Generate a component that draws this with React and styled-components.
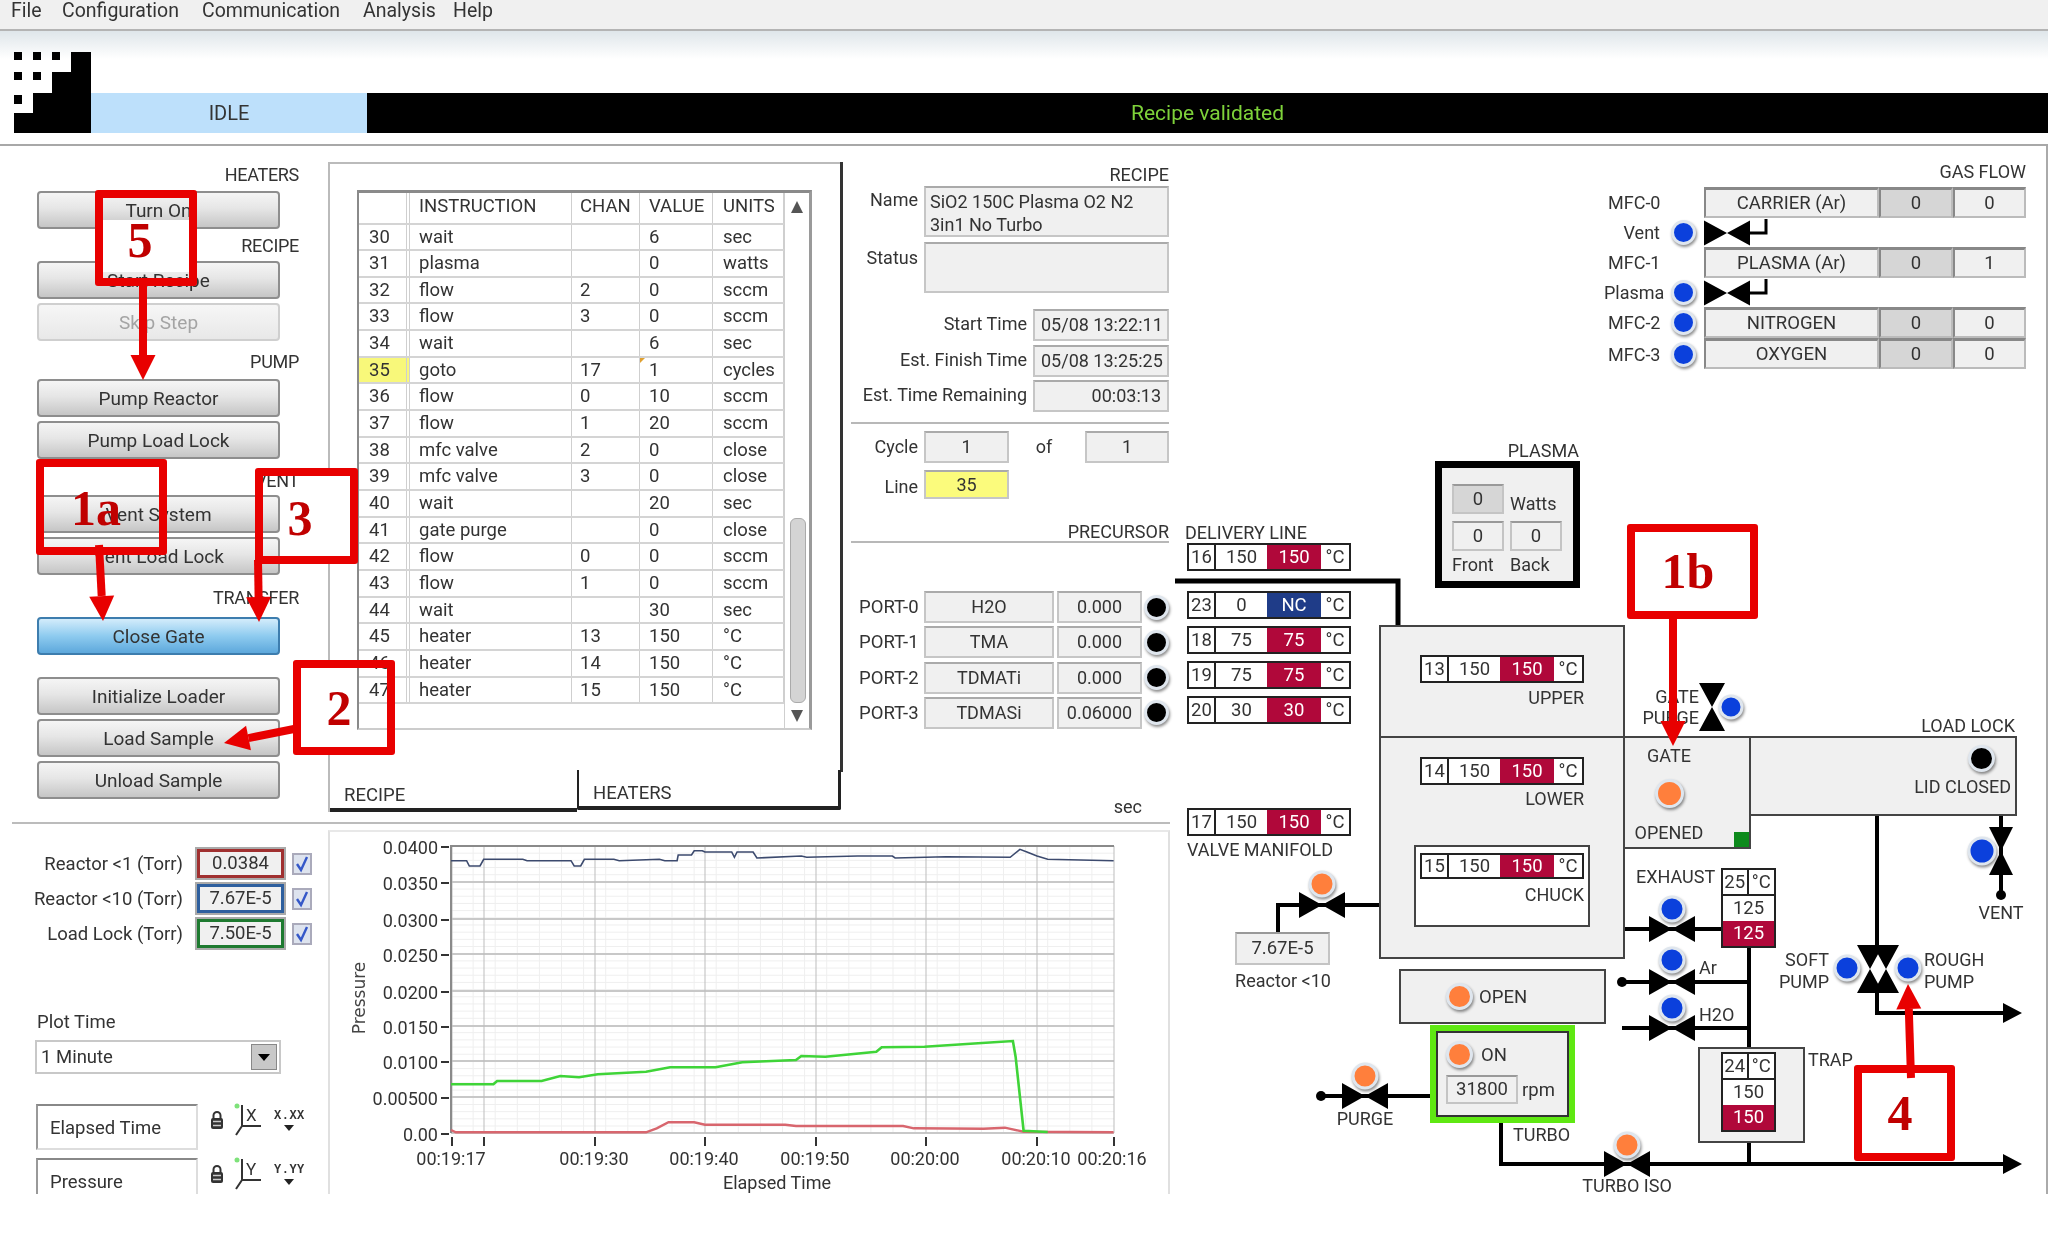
import styled, { createGlobalStyle, css } from 'styled-components';

const GlobalStyle = createGlobalStyle`
  html, body {
    margin: 0;
    background: #fff;
  }
  body {
    font-family: Roboto, "Liberation Sans", sans-serif;
    font-size: 18.5px;
    color: #333;
  }
  * {
    box-sizing: border-box;
  }
`;

const RECIPE_ROWS = [
  [30, 'wait', '', '6', 'sec'],
  [31, 'plasma', '', '0', 'watts'],
  [32, 'flow', '2', '0', 'sccm'],
  [33, 'flow', '3', '0', 'sccm'],
  [34, 'wait', '', '6', 'sec'],
  [35, 'goto', '17', '1', 'cycles'],
  [36, 'flow', '0', '10', 'sccm'],
  [37, 'flow', '1', '20', 'sccm'],
  [38, 'mfc valve', '2', '0', 'close'],
  [39, 'mfc valve', '3', '0', 'close'],
  [40, 'wait', '', '20', 'sec'],
  [41, 'gate purge', '', '0', 'close'],
  [42, 'flow', '0', '0', 'sccm'],
  [43, 'flow', '1', '0', 'sccm'],
  [44, 'wait', '', '30', 'sec'],
  [45, 'heater', '13', '150', '°C'],
  [46, 'heater', '14', '150', '°C'],
  [47, 'heater', '15', '150', '°C'],
];

const PORTS = [
  ['PORT-0', 'H2O', '0.000'],
  ['PORT-1', 'TMA', '0.000'],
  ['PORT-2', 'TDMATi', '0.000'],
  ['PORT-3', 'TDMASi', '0.06000'],
];

const LED_COLORS = { blue: '#0b40dc', orange: '#ff7f3c', black: '#000' };

const Page = styled.div`
  position: relative;
  width: 2048px;
  height: 1256px;
  overflow: hidden;
  background: #fff;
  filter: blur(0.35px);
`;

const MenuBar = styled.div`
  display: flex;
  height: 31px;
  padding-left: 11px;
  background: #f0f0f0;
  border-bottom: 2px solid #b4b4b4;
  font-size: 19.5px;
  line-height: 22px;
`;

const MenuItem = styled.span`
  width: ${p => p.$w}px;
`;

const Banner = styled.div`
  display: flex;
  align-items: flex-end;
  height: 115px;
  padding: 0 0 11px 14px;
  background: linear-gradient(#dfe6ea, #fff 28px);
  border-bottom: 2px solid #a8a8a8;
`;

const StatusBar = styled.div`
  display: flex;
  flex: 1;
  height: 40px;
  background: #000;
`;

const IdleCell = styled.div`
  display: flex;
  align-items: center;
  justify-content: center;
  width: 276px;
  background: #bde0fb;
  font-size: 20px;
`;

const MessageCell = styled.div`
  flex: 1;
  text-align: center;
  line-height: 40px;
  font-size: 21px;
  color: #7ed23a;
`;

const Body = styled.div`
  display: flex;
  height: 1048px;
`;

const LeftSide = styled.div`
  width: 1170px;
`;

const TopRow = styled.div`
  display: flex;
  height: 676px;
`;

const Controls = styled.div`
  width: 328px;
  padding: 19px 0 0 37px;
`;

const Group = styled.div`
  display: flex;
  flex-direction: column;
  gap: 4px;
  width: 262px;
  margin-top: ${p => p.$mt || 0}px;
`;

const GroupLabel = styled.div`
  height: 20px;
  margin-bottom: ${p => p.$gap}px;
  text-align: right;
  font-size: 18px;
  letter-spacing: -0.3px;
  line-height: 20px;
`;

const Button = styled.div`
  display: flex;
  align-items: center;
  justify-content: center;
  width: 243px;
  height: 38px;
  border: 2px solid ${p => (p.$active ? '#3d7dae' : p.$disabled ? '#cfcfcf' : '#8e8e8e')};
  border-radius: 4px;
  font-size: 19px;
  color: ${p => (p.$disabled ? '#a4a4a4' : '#333')};
  background: ${p =>
    p.$active
      ? 'linear-gradient(#d3ecfb, #8ecbef 50%, #5da8dc)'
      : p.$disabled
        ? 'linear-gradient(#f6f6f6, #e8e8e8)'
        : 'linear-gradient(#f5f5f5, #e6e6e6 45%, #c6c6c6)'};
`;

const RecipePanel = styled.div`
  position: relative;
  width: 515px;
  height: 650px;
  margin-top: 16px;
  padding: 26px 0 0 27px;
  border-top: 2px solid #bbb;
  border-left: 2px solid #bbb;
`;

const PanelEdge = styled.div`
  position: absolute;
  top: -2px;
  right: 0;
  width: 3px;
  height: 610px;
  background: #333;
`;

const Grid = styled.div`
  width: 455px;
  height: 540px;
  display: flex;
  border-top: 3px solid #8a8a8a;
  border-left: 2px solid #8a8a8a;
  border-right: 3px solid #9a9a9a;
  border-bottom: 2px solid #ccc;
`;

const GridBody = styled.div`
  width: 425px;
`;

const GridRow = styled.div`
  display: grid;
  grid-template-columns: 51px 162px 68px 73px 71px;
  height: ${p => p.$h}px;
  border-bottom: 2px solid #d4d4d4;
  line-height: ${p => p.$lh}px;
`;

const GridCell = styled.div`
  padding-left: ${p => p.$pad}px;
  border-right: 1px solid #cfcfcf;
  position: relative;
  background: ${p => (p.$mark ? '#f8f87a' : 'transparent')};
  font-size: 18.5px;
`;

const IndexCell = styled(GridCell)`
  border-right: 4px double #cfcfcf;
`;

const Corner = styled.span`
  position: absolute;
  top: 0;
  left: 0;
  border-top: 5px solid #e0a030;
  border-right: 5px solid transparent;
`;

const ScrollTrack = styled.div`
  position: relative;
  flex: 1;
  display: flex;
  flex-direction: column;
  align-items: center;
  justify-content: space-between;
  padding: 8px 0 6px;
  border-left: 1px solid #cfcfcf;
`;

const ScrollArrow = styled.span`
  width: 0;
  height: 0;
  border-left: 6px solid transparent;
  border-right: 6px solid transparent;
  ${p => (p.$down ? 'border-top: 12px solid #555;' : 'border-bottom: 12px solid #555;')}
`;

const ScrollThumb = styled.div`
  position: absolute;
  top: 325px;
  left: 5px;
  width: 16px;
  height: 185px;
  border: 1px solid #aaa;
  border-radius: 6px;
  background: #d4d4d4;
`;

const TabRow = styled.div`
  position: absolute;
  left: 0;
  bottom: 0;
  display: flex;
  align-items: flex-end;
`;

const RecipeTab = styled.div`
  width: 247px;
  height: 32px;
  padding-left: 14px;
  border-bottom: 4px solid #222;
  line-height: 31px;
`;

const HeaterTab = styled.div`
  width: 264px;
  height: 40px;
  margin-bottom: 2px;
  padding: 9px 0 0 14px;
  border: 3px solid #222;
  border-top-width: 0;
  border-left-width: 2px;
  border-bottom-width: 4px;
  border-radius: 0 0 2px 2px;
  line-height: 28px;
`;

const InfoPanel = styled.div`
  width: 318px;
  margin-left: 8px;
  padding-top: 19px;
`;

const Caption = styled.div`
  height: ${p => p.$h || 20}px;
  margin-top: ${p => p.$mt || 0}px;
  padding-right: ${p => p.$pr || 0}px;
  text-align: right;
  font-size: 18px;
  line-height: ${p => p.$h || 20}px;
`;

const FieldRow = styled.div`
  display: grid;
  grid-template-columns: ${p => p.$cols};
  margin-top: ${p => p.$mt}px;
`;

const FieldLabel = styled.div`
  padding: ${p => p.$top || 0}px 6px 0 0;
  text-align: ${p => p.$align || 'right'};
  font-size: 18px;
  line-height: ${p => (p.$top ? '20px' : `${p.$h}px`)};
  white-space: nowrap;
`;

const InfoBox = styled.div`
  height: ${p => p.$h}px;
  padding: ${p => p.$pad || '0 6px'};
  border: 2px solid #c6c6c6;
  border-top-color: #aaa;
  background: ${p => p.$bg || '#f0f0f0'};
  text-align: ${p => p.$align || 'center'};
  font-size: 18px;
  line-height: ${p => (p.$multi ? '23px' : `${p.$h - 4}px`)};
  white-space: nowrap;
`;

const Rule = styled.div`
  height: 2px;
  margin-top: ${p => p.$mt || 0}px;
  background: #b8b8b8;
`;

const PortList = styled.div`
  display: flex;
  flex-direction: column;
  gap: 3.3px;
  margin-top: 48px;
`;

const PortRow = styled.div`
  display: grid;
  grid-template-columns: 73px 130px 85px 30px;
  align-items: center;
`;

const PortName = styled.span`
  padding-left: 8px;
`;

const PortValue = styled(InfoBox)`
  margin-left: 3px;
  width: 85px;
`;

const Led = styled.span`
  display: inline-block;
  flex: none;
  width: ${p => p.$size || 25}px;
  height: ${p => p.$size || 25}px;
  border: 3px solid #dfe6ee;
  border-radius: 50%;
  background: ${p => LED_COLORS[p.$color]};
  box-shadow: 1px 2px 3px rgba(0, 0, 0, 0.45);
`;

const PortLed = styled(Led)`
  justify-self: end;
`;

const Separator = styled.div`
  height: 2px;
  margin-left: 12px;
  background: #bcbcbc;
`;

const BottomRow = styled.div`
  display: flex;
  height: 370px;
  overflow: hidden;
`;

const Gauges = styled.div`
  width: 328px;
  padding-top: 23px;
`;

const GaugeRow = styled.div`
  display: flex;
  align-items: center;
  height: 33px;
  margin-bottom: 2px;
`;

const GaugeLabel = styled.div`
  width: 183px;
  text-align: right;
  white-space: nowrap;
`;

const GaugeValue = styled.div`
  width: 91px;
  height: 33px;
  margin: 0 6px 0 12px;
  border: 2px solid #aaa;
  box-shadow: inset 0 0 0 3px ${p => p.$color};
  background: #f0f0f0;
  text-align: center;
  line-height: 29px;
`;

const CheckBox = styled.div`
  display: flex;
  align-items: center;
  justify-content: center;
  width: 20px;
  height: 22px;
  border: 2px solid #aab;
  background: #dde3ee;
`;

const PlotTime = styled.div`
  margin: 62px 0 0 37px;
  height: 20px;
  line-height: 20px;
`;

const Combo = styled.div`
  display: flex;
  align-items: center;
  justify-content: space-between;
  width: 246px;
  height: 34px;
  margin: 8px 0 0 35px;
  padding: 0 2px 0 4px;
  border: 2px solid #c8c8c8;
`;

const ComboButton = styled.span`
  display: flex;
  align-items: center;
  justify-content: center;
  width: 26px;
  height: 26px;
  border: 1px solid #888;
  background: #c8c8c8;
`;

const ComboArrow = styled.span`
  border-left: 6px solid transparent;
  border-right: 6px solid transparent;
  border-top: 7px solid #000;
`;

const AxisRow = styled.div`
  display: flex;
  align-items: center;
  margin: ${p => p.$mt}px 0 0 36px;
`;

const AxisName = styled.div`
  width: 162px;
  height: 46px;
  padding-left: 12px;
  border: 2px solid #ddd;
  border-top-color: #888;
  border-left-color: #999;
  line-height: 44px;
`;

const AxisTools = styled.div`
  display: flex;
  align-items: center;
  gap: 10px;
  margin: 0 0 14px 12px;
`;

const FormatBox = styled.div`
  display: flex;
  flex-direction: column;
  align-items: center;
  font: bold 12px "Liberation Mono", monospace;
  letter-spacing: 0.5px;
`;

const FormatCaret = styled.span`
  margin-top: 2px;
  border-left: 5px solid transparent;
  border-right: 5px solid transparent;
  border-top: 6px solid #222;
`;

const ChartPanel = styled.div`
  width: 842px;
  height: 364px;
  margin-top: 6px;
  border-top: 2px solid #e8e8e8;
  border-left: 2px solid #e0e0e0;
  border-right: 2px solid #e0e0e0;
`;

const Diagram = styled.div`
  position: relative;
  width: 878px;
  height: 1048px;
  border-right: 2px solid #aaa;
`;

const Piping = styled.svg`
  position: absolute;
  top: 0;
  left: 0;
`;

// schematic items take page coordinates, the canvas offset is worked out here
const place = css`
  position: absolute;
  left: ${p => p.$x - 1170}px;
  top: ${p => p.$y - 146}px;
`;

const Node = styled.div`
  ${place}
  width: ${p => p.$w}px;
  height: ${p => p.$h}px;
`;

const Tag = styled.span`
  ${place}
  white-space: nowrap;
  font-size: 18px;
  line-height: 22px;
  transform: translate(
    ${p => (p.$align === 'right' ? '-100%' : p.$align === 'center' ? '-50%' : '0')},
    -50%
  );
`;

const LedNode = styled(Led)`
  ${place}
  transform: translate(-50%, -50%);
`;

const Chamber = styled(Node)`
  display: flex;
  flex-direction: column;
  border: 2px solid #444;
  background: #f0f0f0;
`;

const HeaterBlock = styled(Chamber)`
  padding: ${p => p.$top}px 0 0 39px;
`;

const GateBlock = styled(Chamber)`
  align-items: center;
  padding: 7px 36px 0 0;
`;

const LoadLockBlock = styled(Chamber)`
  align-items: flex-end;
  padding: 7px 4px 0 0;
`;

const OpenBlock = styled(Chamber)`
  flex-direction: row;
  align-items: center;
  gap: 6px;
  padding-left: 45px;
`;

const TrapBlock = styled(Chamber)`
  padding: 3px 0 0 21px;
`;

const ChuckPanel = styled.div`
  width: 176px;
  height: 82px;
  margin: ${p => p.$mt}px 0 0 -6px;
  padding: 6px 4px;
  border: 2px solid #444;
  background: #fff;
`;

const BlockLabel = styled.div`
  width: 164px;
  margin-top: ${p => p.$mt}px;
  font-size: 18px;
  line-height: 22px;
  text-align: right;
`;

const GateLabel = styled.div`
  margin-top: ${p => p.$mt || 0}px;
  font-size: 18px;
  line-height: 22px;
  white-space: nowrap;
`;

const GateLed = styled(Led)`
  margin-top: 12px;
`;

const LidLed = styled(Led)`
  margin-right: 16px;
`;

const GreenSquare = styled.span`
  position: absolute;
  right: 0;
  bottom: 0;
  width: 15px;
  height: 15px;
  background: #0d8a1c;
`;

const DeliveryColumn = styled(Node)`
  display: flex;
  flex-direction: column;
`;

const DeliveryLabel = styled.div`
  margin: ${p => p.$mt || 0}px 0 0 ${p => p.$ml || 0}px;
  font-size: 18px;
  line-height: 21px;
  white-space: nowrap;
`;

const HeaterList = styled.div`
  display: flex;
  flex-direction: column;
  gap: 7px;
  margin-top: ${p => p.$mt}px;
`;

const Heater = styled.div`
  display: grid;
  flex: none;
  grid-template-columns: 27px 1fr 54px 28px;
  width: 164px;
  height: ${p => p.$h || 28}px;
  border: 2px solid #222;
  background: #fff;
  text-align: center;
  line-height: ${p => (p.$h || 28) - 4}px;
`;

const HeaterCell = styled.div`
  border-right: ${p => (p.$last ? '0' : '2px solid #222')};
`;

const HeaterValue = styled.div`
  background: ${p => (p.$nc ? '#1f3c88' : '#b0083a')};
  color: #fff;
`;

const StackHeater = styled.div`
  display: grid;
  grid-template-rows: 1fr 1fr 1fr;
  width: 55px;
  height: 80px;
  border: 2px solid #222;
  background: #fff;
  text-align: center;
  line-height: 24px;
`;

const PlacedStack = styled(StackHeater)`
  ${place}
`;

const StackTop = styled.div`
  display: grid;
  grid-template-columns: 1fr 1fr;
  border-bottom: 2px solid #222;
`;

const PlasmaBox = styled(Node)`
  display: grid;
  grid-template-columns: 52px 58px;
  grid-template-rows: 30px 30px 22px;
  column-gap: 6px;
  row-gap: 7px;
  padding: 16px 0 0 10px;
  border: 7px solid #000;
  background: #f0f0f0;
`;

const PlasmaNote = styled.span`
  align-self: end;
  font-size: 18px;
  line-height: 20px;
`;

const PlasmaFooter = styled.span`
  margin-top: -4px;
  font-size: 18px;
  line-height: 22px;
`;

const Readout = styled.div`
  width: ${p => p.$w}px;
  height: ${p => p.$h}px;
  border: 2px solid #c4c4c4;
  border-top-color: #999;
  background: ${p => p.$bg || '#f0f0f0'};
  text-align: center;
  line-height: ${p => p.$h - 4}px;
`;

const PlacedReadout = styled(Readout)`
  ${place}
`;

const TurboBox = styled(Node)`
  display: flex;
  flex-direction: column;
  gap: 7px;
  padding: 9px;
  border: 7px solid #5fe812;
  outline: 2px solid #333;
  outline-offset: -8px;
  background: #f0f0f0;
`;

const TurboRow = styled.div`
  display: flex;
  align-items: center;
  gap: ${p => p.$gap}px;
  white-space: nowrap;
`;

const GasFlow = styled(Node)`
  display: grid;
  grid-template-columns: 58px 42px 175px 74px 73px;
  grid-template-rows: 25px 31px 29px 31px 29px 31px 32px;
`;

const GasCaption = styled.div`
  grid-column: 1 / -1;
  text-align: right;
  font-size: 18px;
  line-height: 20px;
`;

const GasLabel = styled.div`
  padding: ${p => (p.$right ? '0 2px 0 0' : '0 0 0 4px')};
  text-align: ${p => (p.$right ? 'right' : 'left')};
  font-size: 18px;
  align-self: center;
  white-space: nowrap;
`;

const GasLed = styled(Led)`
  justify-self: center;
  align-self: center;
`;

const GasValve = styled.svg`
  grid-column: 3 / -1;
  display: block;
`;

const MfcCell = styled.div`
  height: 31px;
  border: 2px solid #bbb;
  border-top: 3px solid #888;
  border-left: 2px solid #888;
  background: ${p => (p.$dark ? '#d6d6d6' : '#f0f0f0')};
  text-align: center;
  line-height: 26px;
`;

const Overlay = styled.svg`
  position: absolute;
  top: 0;
  left: 0;
  pointer-events: none;
`;

const Callout = styled.div`
  position: absolute;
  left: ${p => p.$x}px;
  top: ${p => p.$y}px;
  width: ${p => p.$w}px;
  height: ${p => p.$h}px;
  border: 8px solid #e80000;
  border-radius: 3px;
  background: linear-gradient(#fff, #fff) no-repeat ${p => p.$fill || '0 0 / 100% 100%'};
`;

const CalloutText = styled.span`
  position: absolute;
  left: ${p => p.$x}px;
  top: ${p => p.$y}px;
  transform: translate(-50%, -50%);
  font: bold 50px "Liberation Serif", serif;
  color: #c00000;
  white-space: nowrap;
`;

const px = x => 330 + x / 1.867;
const py = y => 780 + y / 3;

const PRESSURE_BLUE = [[226,242],[255,242],[260,258],[280,258],[287,238],[360,238],[368,242],[450,242],[456,258],[468,258],[475,238],[530,238],[540,242],[615,238],[625,242],[648,242],[650,225],[675,225],[680,212],[695,212],[700,216],[750,216],[755,232],[760,216],[790,216],[797,234],[880,228],[890,232],[985,228],[1050,228],[1055,234],[1150,230],[1270,232],[1288,208],[1300,215],[1320,228],[1340,238],[1463,242]];
const PRESSURE_GREEN = [[226,913],[305,913],[312,903],[395,903],[430,888],[465,892],[500,883],[590,875],[635,862],[720,862],[770,847],[870,840],[880,828],[925,830],[1020,815],[1030,802],[1110,800],[1210,790],[1275,783],[1280,830],[1295,1052],[1340,1056]];
const PRESSURE_RED = [[226,1050],[235,1057],[590,1057],[610,1045],[632,1027],[680,1027],[700,1034],[850,1034],[870,1038],[1070,1038],[1090,1045],[1220,1046],[1260,1043],[1295,1055],[1463,1057]];

const toPoints = data => data.map(([x, y]) => `${px(x).toFixed(1)},${py(y).toFixed(1)}`).join(' ');

const Y_TICKS = [
  ['0.0400', 846], ['0.0350', 882], ['0.0300', 919], ['0.0250', 954], ['0.0200', 991],
  ['0.0150', 1026], ['0.0100', 1061], ['0.00500', 1097], ['0.00', 1133],
];
const X_TICKS = [
  ['00:19:17', 452, 451], ['', 484, 0], ['00:19:30', 595, 594], ['00:19:40', 705, 704],
  ['00:19:50', 816, 815], ['00:20:00', 926, 925], ['00:20:10', 1037, 1036], ['00:20:16', 1114, 1112],
];

const ChartText = styled.text`
  font-family: Roboto, "Liberation Sans", sans-serif;
  font-size: 18px;
  fill: #333;
`;

const PressureChart = () => {
  const minorX = Array.from({ length: 30 }, (_, i) => 451 + i * 22.1);
  const minorY = Array.from({ length: 40 }, (_, i) => 846 + i * 7.18);
  return (
    <svg width="838" height="362" viewBox="330 832 838 362">
      {minorX.map(x => <line key={x} x1={x} x2={x} y1="846" y2="1133" stroke="#efefef" />)}
      {minorY.map(y => <line key={y} x1="451" x2="1114" y1={y} y2={y} stroke="#efefef" />)}
      {Y_TICKS.map(([, y]) => <line key={y} x1="451" x2="1114" y1={y} y2={y} stroke="#c8c8c8" strokeWidth="2" />)}
      {X_TICKS.map(([, x]) => <line key={x} x1={x} x2={x} y1="846" y2="1133" stroke="#bdbdbd" />)}
      <path d="M451 1133V846H1114" fill="none" stroke="#8a8a8a" strokeWidth="2" />
      <polyline points={toPoints(PRESSURE_BLUE)} fill="none" stroke="#3c4a6e" strokeWidth="1.6" />
      <polyline points={toPoints(PRESSURE_RED)} fill="none" stroke="#d8666e" strokeWidth="2.4" />
      <polyline points={toPoints(PRESSURE_GREEN)} fill="none" stroke="#3fd438" strokeWidth="2.6" />
      {Y_TICKS.map(([label, y]) => (
        <g key={label}>
          <line x1="441" x2="449" y1={y + 1} y2={y + 1} stroke="#333" strokeWidth="2" />
          <ChartText x="438" y={y + 8} textAnchor="end">{label}</ChartText>
        </g>
      ))}
      {X_TICKS.map(([label, x, labelX]) => (
        <g key={x}>
          <line x1={x} x2={x} y1="1137" y2="1146" stroke="#333" strokeWidth="2" />
          {label && <ChartText x={labelX} y="1165" textAnchor="middle">{label}</ChartText>}
        </g>
      ))}
      <ChartText x="777" y="1189" textAnchor="middle">Elapsed Time</ChartText>
      <text
        x="360"
        y="998"
        transform="rotate(-90 360 998)"
        textAnchor="middle"
        dominantBaseline="middle"
        fontFamily="'DejaVu Sans', sans-serif"
        fontSize="17"
        fill="#444"
      >
        Pressure
      </text>
    </svg>
  );
};

const Bowtie = ({ cx, cy, w = 46, h = 26 }) => (
  <path
    d={`M${cx - w / 2} ${cy - h / 2}L${cx} ${cy}L${cx - w / 2} ${cy + h / 2}ZM${cx + w / 2} ${cy - h / 2}L${cx} ${cy}L${cx + w / 2} ${cy + h / 2}Z`}
    fill="#000"
  />
);

const Hourglass = ({ cx, cy, w = 26, h = 48 }) => (
  <path
    d={`M${cx - w / 2} ${cy - h / 2}H${cx + w / 2}L${cx} ${cy}ZM${cx - w / 2} ${cy + h / 2}H${cx + w / 2}L${cx} ${cy}Z`}
    fill="#000"
  />
);

const PIPES = [
  ['1175,581 1398,581 1398,625', 5],
  ['1379,905 1278,905 1278,932', 4],
  ['1624,929 1721,929', 4],
  ['1622,982 1749,982', 4],
  ['1622,1028 1749,1028', 4],
  ['1749,948 1749,1047', 4],
  ['1749,1143 1749,1164', 4],
  ['1501,1123 1501,1164 2008,1164', 4],
  ['1877,815 1877,945', 4],
  ['1877,993 1877,1013 2008,1013', 4],
  ['2001,815 2001,895', 4],
  ['1321,1096 1430,1096', 4],
];

const PipingLayer = () => (
  <Piping width="878" height="1048" viewBox="1170 146 878 1048">
    {PIPES.map(([points, width]) => (
      <polyline key={points} points={points} fill="none" stroke="#000" strokeWidth={width} />
    ))}
    <circle cx="1622" cy="982" r="5" />
    <circle cx="1321" cy="1096" r="5" />
    <circle cx="2001" cy="895" r="5" />
    <path d="M2003 1003L2022 1013L2003 1023ZM2003 1154L2022 1164L2003 1174Z" />
    <Bowtie cx={1322} cy={905} />
    <Bowtie cx={1365} cy={1096} />
    <Bowtie cx={1672} cy={929} />
    <Bowtie cx={1672} cy={982} />
    <Bowtie cx={1672} cy={1028} />
    <Bowtie cx={1627} cy={1164} />
    <Hourglass cx={1870} cy={969} />
    <Hourglass cx={1886} cy={969} />
    <Hourglass cx={1712} cy={707} />
    <Hourglass cx={2001} cy={851} w={24} />
  </Piping>
);

const HeaterRow = ({ h, id, set, value, nc }) => (
  <Heater $h={h}>
    <HeaterCell>{id}</HeaterCell>
    <HeaterCell $last>{set}</HeaterCell>
    <HeaterValue $nc={nc}>{value}</HeaterValue>
    <HeaterCell $last>°C</HeaterCell>
  </Heater>
);

const HeaterStackBody = ({ id, set, value }) => (
  <>
    <StackTop>
      <HeaterCell>{id}</HeaterCell>
      <HeaterCell $last>°C</HeaterCell>
    </StackTop>
    <div>{set}</div>
    <HeaterValue>{value}</HeaterValue>
  </>
);

const MfcCells = ({ name, flow, set }) => (
  <>
    <MfcCell>{name}</MfcCell>
    <MfcCell $dark>{flow}</MfcCell>
    <MfcCell>{set}</MfcCell>
  </>
);

const ValveWithReturn = () => (
  <GasValve width="70" height="29" viewBox="0 0 70 29">
    <Bowtie cx={23} cy={15} h={25} />
    <path d="M41 15H62V1" fill="none" stroke="#000" strokeWidth="3" />
  </GasValve>
);

const GasFlowPanel = () => (
  <GasFlow $x={1604} $y={162} $w={422} $h={208}>
    <GasCaption>GAS FLOW</GasCaption>
    <GasLabel>MFC-0</GasLabel>
    <span />
    <MfcCells name="CARRIER (Ar)" flow="0" set="0" />
    <GasLabel $right>Vent</GasLabel>
    <GasLed $color="blue" />
    <ValveWithReturn />
    <GasLabel>MFC-1</GasLabel>
    <span />
    <MfcCells name="PLASMA (Ar)" flow="0" set="1" />
    <GasLabel $right>Plasma</GasLabel>
    <GasLed $color="blue" />
    <ValveWithReturn />
    <GasLabel>MFC-2</GasLabel>
    <GasLed $color="blue" />
    <MfcCells name="NITROGEN" flow="0" set="0" />
    <GasLabel>MFC-3</GasLabel>
    <GasLed $color="blue" />
    <MfcCells name="OXYGEN" flow="0" set="0" />
  </GasFlow>
);

const Schematic = () => (
  <Diagram>
    <DeliveryColumn $x={1187} $y={522} $w={170} $h={340}>
      <DeliveryLabel $ml={-2}>DELIVERY LINE</DeliveryLabel>
      <HeaterRow id="16" set="150" value="150" />
      <HeaterList $mt={20}>
        <HeaterRow id="23" set="0" value="NC" nc />
        <HeaterRow id="18" set="75" value="75" />
        <HeaterRow id="19" set="75" value="75" />
        <HeaterRow id="20" set="30" value="30" />
      </HeaterList>
      <HeaterList $mt={84}>
        <HeaterRow id="17" set="150" value="150" />
      </HeaterList>
      <DeliveryLabel $mt={3}>VALVE MANIFOLD</DeliveryLabel>
    </DeliveryColumn>

    <GasFlowPanel />

    <Tag $x={1579} $y={451} $align="right">PLASMA</Tag>
    <PlasmaBox $x={1435} $y={461} $w={145} $h={127}>
      <Readout $h={30} $bg="#d6d6d6">0</Readout>
      <PlasmaNote>Watts</PlasmaNote>
      <Readout $h={30}>0</Readout>
      <Readout $h={30} $w={52}>0</Readout>
      <PlasmaFooter>Front</PlasmaFooter>
      <PlasmaFooter>Back</PlasmaFooter>
    </PlasmaBox>

    <PipingLayer />

    <HeaterBlock $x={1379} $y={625} $w={246} $h={113} $top={28}>
      <HeaterRow id="13" set="150" value="150" />
      <BlockLabel $mt={4}>UPPER</BlockLabel>
    </HeaterBlock>
    <HeaterBlock $x={1379} $y={736} $w={246} $h={223} $top={19}>
      <HeaterRow id="14" set="150" value="150" />
      <BlockLabel $mt={3}>LOWER</BlockLabel>
      <ChuckPanel $mt={35}>
        <HeaterRow h={26} id="15" set="150" value="150" />
        <BlockLabel $mt={5}>CHUCK</BlockLabel>
      </ChuckPanel>
    </HeaterBlock>

    <GateBlock $x={1623} $y={736} $w={128} $h={113}>
      <GateLabel>GATE</GateLabel>
      <GateLed $size={29} $color="orange" />
      <GateLabel $mt={14}>OPENED</GateLabel>
      <GreenSquare />
    </GateBlock>
    <Tag $x={1699} $y={697} $align="right">GATE</Tag>
    <Tag $x={1699} $y={718} $align="right">PURGE</Tag>
    <LedNode $x={1731} $y={707} $color="blue" />

    <LoadLockBlock $x={1749} $y={736} $w={268} $h={80}>
      <LidLed $size={27} $color="black" />
      <GateLabel $mt={4}>LID CLOSED</GateLabel>
    </LoadLockBlock>
    <Tag $x={2015} $y={726} $align="right">LOAD LOCK</Tag>
    <LedNode $x={1982} $y={851} $size={29} $color="blue" />
    <Tag $x={2001} $y={913} $align="center">VENT</Tag>

    <LedNode $x={1322} $y={884} $size={27} $color="orange" />
    <PlacedReadout $x={1235} $y={932} $w={95} $h={33}>7.67E-5</PlacedReadout>
    <Tag $x={1283} $y={981} $align="center">Reactor &lt;10</Tag>

    <Tag $x={1636} $y={877}>EXHAUST</Tag>
    <PlacedStack $x={1721} $y={868}>
      <HeaterStackBody id="25" set="125" value="125" />
    </PlacedStack>
    <LedNode $x={1672} $y={909} $size={27} $color="blue" />
    <LedNode $x={1672} $y={960} $size={27} $color="blue" />
    <Tag $x={1699} $y={968}>Ar</Tag>
    <LedNode $x={1672} $y={1008} $size={27} $color="blue" />
    <Tag $x={1699} $y={1015}>H2O</Tag>

    <OpenBlock $x={1399} $y={969} $w={207} $h={55}>
      <Led $size={27} $color="orange" />
      OPEN
    </OpenBlock>

    <TurboBox $x={1430} $y={1025} $w={145} $h={98}>
      <TurboRow $gap={8}>
        <Led $size={27} $color="orange" />
        ON
      </TurboRow>
      <TurboRow $gap={4}>
        <Readout $w={72} $h={29}>31800</Readout>
        rpm
      </TurboRow>
    </TurboBox>
    <Tag $x={1513} $y={1135}>TURBO</Tag>

    <LedNode $x={1365} $y={1076} $size={27} $color="orange" />
    <Tag $x={1365} $y={1119} $align="center">PURGE</Tag>

    <TrapBlock $x={1698} $y={1047} $w={107} $h={96}>
      <StackHeater>
        <HeaterStackBody id="24" set="150" value="150" />
      </StackHeater>
    </TrapBlock>
    <Tag $x={1808} $y={1060}>TRAP</Tag>

    <LedNode $x={1627} $y={1145} $size={27} $color="orange" />
    <Tag $x={1627} $y={1186} $align="center">TURBO ISO</Tag>

    <Tag $x={1829} $y={960} $align="right">SOFT</Tag>
    <Tag $x={1829} $y={982} $align="right">PUMP</Tag>
    <LedNode $x={1847} $y={968} $size={27} $color="blue" />
    <LedNode $x={1908} $y={968} $size={27} $color="blue" />
    <Tag $x={1924} $y={960}>ROUGH</Tag>
    <Tag $x={1924} $y={982}>PUMP</Tag>
  </Diagram>
);

const Arrow = ({ from, to, head = 25 }) => {
  const [x1, y1] = from;
  const [x2, y2] = to;
  const len = Math.hypot(x2 - x1, y2 - y1);
  const ux = (x2 - x1) / len;
  const uy = (y2 - y1) / len;
  const bx = x2 - ux * head;
  const by = y2 - uy * head;
  const wing = head / 2;
  return (
    <g fill="#e80000" stroke="none">
      <line x1={x1} y1={y1} x2={bx} y2={by} stroke="#e80000" strokeWidth="8" />
      <polygon points={`${x2},${y2} ${bx - uy * wing},${by + ux * wing} ${bx + uy * wing},${by - ux * wing}`} />
    </g>
  );
};

const Annotations = () => (
  <>
    <Callout $x={95} $y={190} $w={102} $h={96} $fill="0 22px / 100% 52px">
      <CalloutText $x={37} $y={42}>5</CalloutText>
    </Callout>
    <Callout $x={36} $y={459} $w={131} $h={96} $fill="0 0 / 0 0">
      <CalloutText $x={52} $y={41}>1a</CalloutText>
    </Callout>
    <Callout $x={255} $y={468} $w={103} $h={96} $fill="38px 0 / 100% 100%">
      <CalloutText $x={37} $y={42}>3</CalloutText>
    </Callout>
    <Callout $x={293} $y={660} $w={102} $h={95} $fill="0 0 / 56px 100%">
      <CalloutText $x={38} $y={40}>2</CalloutText>
    </Callout>
    <Callout $x={1627} $y={524} $w={131} $h={95}>
      <CalloutText $x={53} $y={39}>1b</CalloutText>
    </Callout>
    <Callout $x={1854} $y={1065} $w={101} $h={96}>
      <CalloutText $x={38} $y={40}>4</CalloutText>
    </Callout>
    <Overlay width="2048" height="1256" viewBox="0 0 2048 1256">
      <Arrow from={[143, 286]} to={[143, 380]} />
      <Arrow from={[99, 545]} to={[103, 621]} />
      <Arrow from={[258, 560]} to={[259, 622]} />
      <Arrow from={[294, 729]} to={[224, 743]} />
      <Arrow from={[1673, 619]} to={[1673, 746]} />
      <Arrow from={[1911, 1078]} to={[1908, 984]} />
    </Overlay>
  </>
);

const Check = () => (
  <svg width="14" height="18" viewBox="0 0 14 18">
    <path d="M2 9L6 15L12 2" fill="none" stroke="#3558c8" strokeWidth="2.4" />
  </svg>
);

const PadLock = () => (
  <svg width="14" height="20" viewBox="0 0 14 20">
    <path d="M3.5 9V5.5a3.5 3.5 0 0 1 7 0V9" fill="none" stroke="#333" strokeWidth="2" />
    <rect x="1" y="8" width="12" height="11" rx="2" fill="#333" />
    <path d="M3 11.5H11M3 15.5H11" stroke="#ccc" strokeWidth="1.4" />
  </svg>
);

const ScaleGlyph = ({ letter }) => (
  <svg width="30" height="36" viewBox="0 0 30 36">
    <circle cx="3" cy="4" r="2.5" fill="#7ee27a" />
    <path d="M8 3V24H27M8 24L2 33" fill="none" stroke="#333" strokeWidth="2" />
    <text x="12" y="19" fontFamily="Roboto, sans-serif" fontSize="17" fill="#333">{letter}</text>
  </svg>
);

const AxisControl = ({ mt, name, letter, format }) => (
  <AxisRow $mt={mt}>
    <AxisName>{name}</AxisName>
    <AxisTools>
      <PadLock />
      <ScaleGlyph letter={letter} />
      <FormatBox>
        {format}
        <FormatCaret />
      </FormatBox>
    </AxisTools>
  </AxisRow>
);

const App = () => (
  <>
    <GlobalStyle />
    <Page>
      <MenuBar>
        <MenuItem $w={51}>File</MenuItem>
        <MenuItem $w={140}>Configuration</MenuItem>
        <MenuItem $w={161}>Communication</MenuItem>
        <MenuItem $w={90}>Analysis</MenuItem>
        <MenuItem $w={50}>Help</MenuItem>
      </MenuBar>
      <Banner>
        <svg width="77" height="81" viewBox="0 0 77 81">
          <path d="M0 0h8v8H0zM19 0h8v8h-8zM38 0h8v8h-8zM57 0h20v81H0V61h19V41h19V20h19zM0 20h8v8H0zM19 20h8v8h-8zM0 43h8v9H0z" />
        </svg>
        <StatusBar>
          <IdleCell>IDLE</IdleCell>
          <MessageCell>Recipe validated</MessageCell>
        </StatusBar>
      </Banner>
      <Body>
        <LeftSide>
          <TopRow>
            <Controls>
              <Group>
                <GroupLabel $gap={2}>HEATERS</GroupLabel>
                <Button>Turn On</Button>
              </Group>
              <Group $mt={7}>
                <GroupLabel $gap={1}>RECIPE</GroupLabel>
                <Button>Start Recipe</Button>
                <Button $disabled>Skip Step</Button>
              </Group>
              <Group $mt={11}>
                <GroupLabel $gap={3}>PUMP</GroupLabel>
                <Button>Pump Reactor</Button>
                <Button>Pump Load Lock</Button>
              </Group>
              <Group $mt={12}>
                <GroupLabel $gap={0}>VENT</GroupLabel>
                <Button>Vent System</Button>
                <Button>Vent Load Lock</Button>
              </Group>
              <Group $mt={13}>
                <GroupLabel $gap={5}>TRANSFER</GroupLabel>
                <Button $active>Close Gate</Button>
              </Group>
              <Group $mt={22}>
                <Button>Initialize Loader</Button>
                <Button>Load Sample</Button>
                <Button>Unload Sample</Button>
              </Group>
            </Controls>
            <RecipePanel>
              <PanelEdge />
              <Grid>
                <GridBody>
                  <GridRow $h={31.5} $lh={26}>
                    <IndexCell $pad={10} />
                    <GridCell $pad={9}>INSTRUCTION</GridCell>
                    <GridCell $pad={8}>CHAN</GridCell>
                    <GridCell $pad={9}>VALUE</GridCell>
                    <GridCell $pad={10}>UNITS</GridCell>
                  </GridRow>
                  {RECIPE_ROWS.map(([line, instruction, chan, value, units]) => (
                    <GridRow key={line} $h={26.67} $lh={24.67}>
                      <IndexCell $pad={10} $mark={line === 35}>{line}</IndexCell>
                      <GridCell $pad={9}>{instruction}</GridCell>
                      <GridCell $pad={8}>{chan}</GridCell>
                      <GridCell $pad={9}>
                        {line === 35 && <Corner />}
                        {value}
                      </GridCell>
                      <GridCell $pad={10}>{units}</GridCell>
                    </GridRow>
                  ))}
                </GridBody>
                <ScrollTrack>
                  <ScrollArrow />
                  <ScrollThumb />
                  <ScrollArrow $down />
                </ScrollTrack>
              </Grid>
              <TabRow>
                <RecipeTab>RECIPE</RecipeTab>
                <HeaterTab>HEATERS</HeaterTab>
              </TabRow>
            </RecipePanel>
            <InfoPanel>
              <Caption>RECIPE</Caption>
              <FieldRow $cols="73px 245px" $mt={1}>
                <FieldLabel $top={4}>Name</FieldLabel>
                <InfoBox $h={51} $align="left" $pad="2px 4px" $multi>
                  SiO2 150C Plasma O2 N2
                  <br />
                  3in1 No Turbo
                </InfoBox>
              </FieldRow>
              <FieldRow $cols="73px 245px" $mt={5}>
                <FieldLabel $top={6}>Status</FieldLabel>
                <InfoBox $h={51} />
              </FieldRow>
              <FieldRow $cols="182px 136px" $mt={16}>
                <FieldLabel $h={30}>Start Time</FieldLabel>
                <InfoBox $h={32}>05/08 13:22:11</InfoBox>
              </FieldRow>
              <FieldRow $cols="182px 136px" $mt={4}>
                <FieldLabel $h={30}>Est. Finish Time</FieldLabel>
                <InfoBox $h={32}>05/08 13:25:25</InfoBox>
              </FieldRow>
              <FieldRow $cols="182px 136px" $mt={3}>
                <FieldLabel $h={30}>Est. Time Remaining</FieldLabel>
                <InfoBox $h={32} $align="right">00:03:13</InfoBox>
              </FieldRow>
              <Rule $mt={10} />
              <FieldRow $cols="73px 85px 76px 84px" $mt={7}>
                <FieldLabel $h={32}>Cycle</FieldLabel>
                <InfoBox $h={32}>1</InfoBox>
                <FieldLabel $h={32} $align="center">of</FieldLabel>
                <InfoBox $h={32}>1</InfoBox>
              </FieldRow>
              <FieldRow $cols="73px 85px" $mt={7}>
                <FieldLabel $h={33}>Line</FieldLabel>
                <InfoBox $h={29} $bg="#fbfb7c">35</InfoBox>
              </FieldRow>
              <Caption $mt={20} $h={18}>PRECURSOR</Caption>
              <Rule />
              <PortList>
                {PORTS.map(([port, name, value]) => (
                  <PortRow key={port}>
                    <PortName>{port}</PortName>
                    <InfoBox $h={32}>{name}</InfoBox>
                    <PortValue $h={32} $pad="0">{value}</PortValue>
                    <PortLed $color="black" />
                  </PortRow>
                ))}
              </PortList>
              <Caption $mt={68} $pr={27}>sec</Caption>
            </InfoPanel>
          </TopRow>
          <Separator />
          <BottomRow>
            <Gauges>
              <GaugeRow>
                <GaugeLabel>Reactor &lt;1 (Torr)</GaugeLabel>
                <GaugeValue $color="#a03030">0.0384</GaugeValue>
                <CheckBox><Check /></CheckBox>
              </GaugeRow>
              <GaugeRow>
                <GaugeLabel>Reactor &lt;10 (Torr)</GaugeLabel>
                <GaugeValue $color="#2e5f9e">7.67E-5</GaugeValue>
                <CheckBox><Check /></CheckBox>
              </GaugeRow>
              <GaugeRow>
                <GaugeLabel>Load Lock (Torr)</GaugeLabel>
                <GaugeValue $color="#1e7a30">7.50E-5</GaugeValue>
                <CheckBox><Check /></CheckBox>
              </GaugeRow>
              <PlotTime>Plot Time</PlotTime>
              <Combo>
                1 Minute
                <ComboButton><ComboArrow /></ComboButton>
              </Combo>
              <AxisControl mt={28} name="Elapsed Time" letter="X" format="X.XX" />
              <AxisControl mt={4} name="Pressure" letter="Y" format="Y.YY" />
            </Gauges>
            <ChartPanel>
              <PressureChart />
            </ChartPanel>
          </BottomRow>
        </LeftSide>
        <Schematic />
      </Body>
      <Annotations />
    </Page>
  </>
);

export default App;
